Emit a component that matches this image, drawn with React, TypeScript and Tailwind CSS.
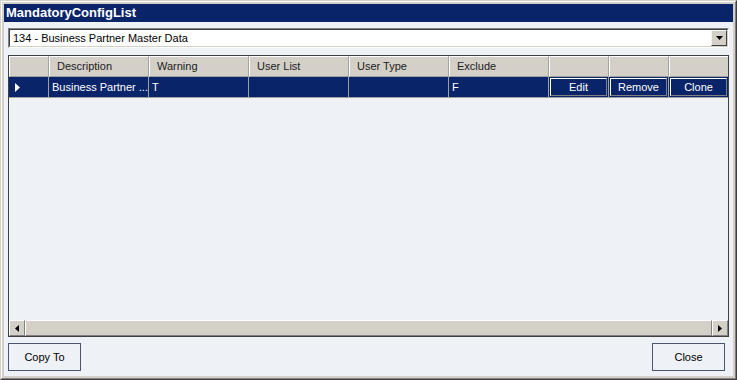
import React from "react";

const cols = [
  { w: 100, label: "Description", val: "Business Partner ..." },
  { w: 100, label: "Warning", val: "T" },
  { w: 100, label: "User List", val: "" },
  { w: 100, label: "User Type", val: "" },
  { w: 100, label: "Exclude", val: "F" },
];
const btns = ["Edit", "Remove", "Clone"];

export default function App() {
  return (
    <div
      className="w-[737px] h-[380px] bg-[#d4d0c8] border border-t-[#d4d0c8] border-l-[#d4d0c8] border-r-[#404040] border-b-[#404040] text-[11px] text-black"
      style={{ fontFamily: '"Liberation Sans", Arial, sans-serif' }}
    >
      <div className="w-full h-full border border-t-white border-l-white border-r-[#808080] border-b-[#808080] p-[2px] flex flex-col">
        <div className="h-[18px] bg-[#0a246a] text-white font-bold text-[13px] leading-[18px] pl-[2px] shrink-0">
          MandatoryConfigList
        </div>
        <div className="flex-1 bg-[#eef2f6] flex flex-col px-[4px] pt-[6px]">
          {/* combo */}
          <div className="h-[20px] w-[721px] border border-t-[#808080] border-l-[#808080] border-r-white border-b-white shrink-0">
            <div className="h-full border border-t-[#404040] border-l-[#404040] border-r-[#d4d0c8] border-b-[#d4d0c8] bg-white flex items-center">
              <span className="pl-[3px] flex-1 leading-none whitespace-nowrap">134 - Business Partner Master Data</span>
              <div className="w-[16px] h-[16px] bg-[#d4d0c8] border border-t-[#f4f4f4] border-l-[#f4f4f4] border-r-[#404040] border-b-[#404040] flex items-center justify-center">
                <svg width="7" height="4" viewBox="0 0 7 4">
                  <path d="M0 0h7L3.5 4z" fill="#000" />
                </svg>
              </div>
            </div>
          </div>
          {/* grid */}
          <div className="mt-[7px] h-[282px] w-[721px] border border-[#404040] flex flex-col overflow-hidden shrink-0">
            <div className="flex h-[21px] bg-[#d4d0c8] shrink-0">
              <div className="w-[40px] shrink-0 h-full border-l border-t border-l-white border-t-white border-r border-r-[#a0a0a0] border-b border-b-[#a0a0a0]" />
              {cols.map((c) => (
                <div
                  key={c.label}
                  className="w-[100px] shrink-0 h-full border-l border-t border-l-white border-t-white border-r border-r-[#a0a0a0] border-b border-b-[#a0a0a0] pl-[7px] flex items-center text-[#202020] whitespace-nowrap"
                >
                  {c.label}
                </div>
              ))}
              {btns.map((b) => (
                <div
                  key={b}
                  className="w-[60px] shrink-0 h-full border-l border-t border-l-white border-t-white border-r border-r-[#a0a0a0] border-b border-b-[#a0a0a0]"
                />
              ))}
            </div>
            <div className="flex h-[21px] bg-[#0a246a] text-white shrink-0">
              <div className="w-[40px] shrink-0 h-full border-r border-b border-[#a0a0a0] flex items-center pl-[6px]">
                <svg width="5" height="9" viewBox="0 0 5 9">
                  <path d="M0 0L5 4.5 0 9z" fill="#fff" />
                </svg>
              </div>
              {cols.map((c) => (
                <div
                  key={c.label}
                  className="w-[100px] shrink-0 h-full border-r border-b border-[#a0a0a0] pl-[3px] flex items-center whitespace-nowrap overflow-hidden"
                >
                  {c.val}
                </div>
              ))}
              {btns.map((b) => (
                <div key={b} className="w-[60px] shrink-0 h-full border-r border-b border-[#a0a0a0] p-[1px]">
                  <div className="w-full h-full border border-t-white border-l-white border-r-[#808080] border-b-[#808080] flex items-center justify-center">
                    {b}
                  </div>
                </div>
              ))}
            </div>
            <div className="flex-1" />
            {/* h scrollbar */}
            <div className="h-[16px] flex bg-[#e8e6e2] shrink-0">
              <div className="w-[16px] h-full bg-[#d4d0c8] border border-t-white border-l-white border-r-[#808080] border-b-[#808080] flex items-center justify-center">
                <svg width="4" height="7" viewBox="0 0 4 7">
                  <path d="M4 0L0 3.5 4 7z" fill="#000" />
                </svg>
              </div>
              <div className="flex-1 h-full bg-[#d4d0c8] border border-t-white border-l-white border-r-[#808080] border-b-[#808080]" />
              <div className="w-[16px] h-full bg-[#d4d0c8] border border-t-white border-l-white border-r-[#808080] border-b-[#808080] flex items-center justify-center">
                <svg width="4" height="7" viewBox="0 0 4 7">
                  <path d="M0 0L4 3.5 0 7z" fill="#000" />
                </svg>
              </div>
            </div>
          </div>
          {/* buttons */}
          <div className="mt-[6px] flex justify-between w-[717px] shrink-0">
            <div className="w-[73px] h-[28px] border border-[#4a5670] flex items-center justify-center bg-[#eef2f6]">
              Copy To
            </div>
            <div className="w-[73px] h-[28px] border border-[#4a5670] flex items-center justify-center bg-[#eef2f6]">
              Close
            </div>
          </div>
        </div>
      </div>
    </div>
  );
}
